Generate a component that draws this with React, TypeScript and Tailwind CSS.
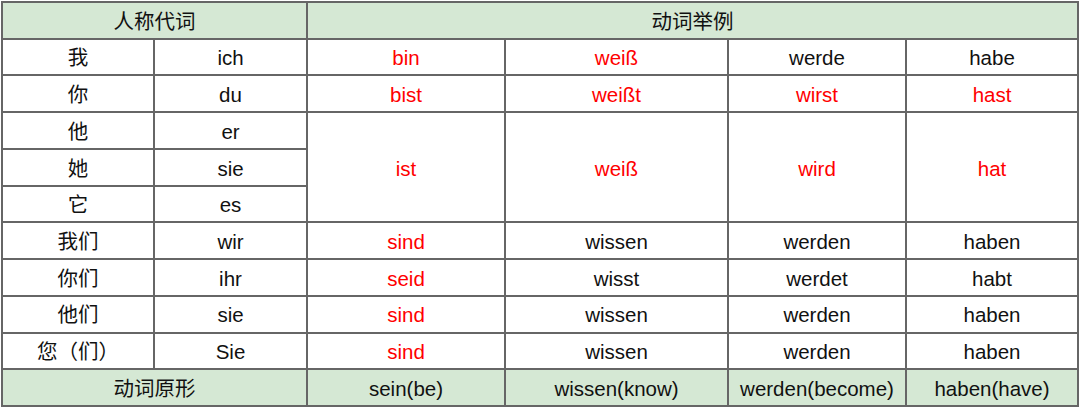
import React from "react";

type Cell = { t: string; red?: boolean; green?: boolean; cls?: string };

const font = { fontFamily: '"Liberation Sans", Arial, "Noto Sans CJK SC", sans-serif' };

function C({ t, red, green, cls = "" }: Cell) {
  return (
    <div
      className={`flex items-center justify-center pt-[3px] text-[20.5px] leading-none ${
        green ? "bg-[#d5e8d4]" : "bg-white"
      } ${red ? "text-[#ff0000]" : "text-[#111]"} ${cls}`}
    >
      {t}
    </div>
  );
}

export default function App() {
  const rows: [string, string, Cell[]][] = [
    ["我", "ich", [{ t: "bin", red: true }, { t: "weiß", red: true }, { t: "werde" }, { t: "habe" }]],
    ["你", "du", [{ t: "bist", red: true }, { t: "weißt", red: true }, { t: "wirst", red: true }, { t: "hast", red: true }]],
  ];
  const rows2: [string, string, Cell[]][] = [
    ["我们", "wir", [{ t: "sind", red: true }, { t: "wissen" }, { t: "werden" }, { t: "haben" }]],
    ["你们", "ihr", [{ t: "seid", red: true }, { t: "wisst" }, { t: "werdet" }, { t: "habt" }]],
    ["他们", "sie", [{ t: "sind", red: true }, { t: "wissen" }, { t: "werden" }, { t: "haben" }]],
    ["您（们）", "Sie", [{ t: "sind", red: true }, { t: "wissen" }, { t: "werden" }, { t: "haben" }]],
  ];
  return (
    <div className="w-[1080px] h-[410px] bg-white" style={font}>
      <div className="ml-[1px] mt-[1px] w-[1078px] h-[406px] bg-[#666] p-[2px] grid gap-[2px] grid-cols-[150fr_151fr_196fr_221fr_176fr_170fr] grid-rows-[repeat(11,minmax(0,1fr))]">
        <C t="人称代词" green cls="col-span-2" />
        <C t="动词举例" green cls="col-span-4" />
        {rows.map(([a, b, cs], i) => (
          <React.Fragment key={i}>
            <C t={a} />
            <C t={b} />
            {cs.map((c, j) => (
              <C key={j} {...c} />
            ))}
          </React.Fragment>
        ))}
        <C t="他" cls="col-start-1 row-start-4" />
        <C t="er" cls="col-start-2 row-start-4" />
        <C t="ist" red cls="col-start-3 row-start-4 row-span-3" />
        <C t="weiß" red cls="col-start-4 row-start-4 row-span-3" />
        <C t="wird" red cls="col-start-5 row-start-4 row-span-3" />
        <C t="hat" red cls="col-start-6 row-start-4 row-span-3" />
        <C t="她" cls="col-start-1 row-start-5" />
        <C t="sie" cls="col-start-2 row-start-5" />
        <C t="它" cls="col-start-1 row-start-6" />
        <C t="es" cls="col-start-2 row-start-6" />
        {rows2.map(([a, b, cs], i) => (
          <React.Fragment key={"r" + i}>
            <C t={a} />
            <C t={b} />
            {cs.map((c, j) => (
              <C key={j} {...c} />
            ))}
          </React.Fragment>
        ))}
        <C t="动词原形" green cls="col-span-2" />
        <C t="sein(be)" green />
        <C t="wissen(know)" green />
        <C t="werden(become)" green />
        <C t="haben(have)" green />
      </div>
    </div>
  );
}
